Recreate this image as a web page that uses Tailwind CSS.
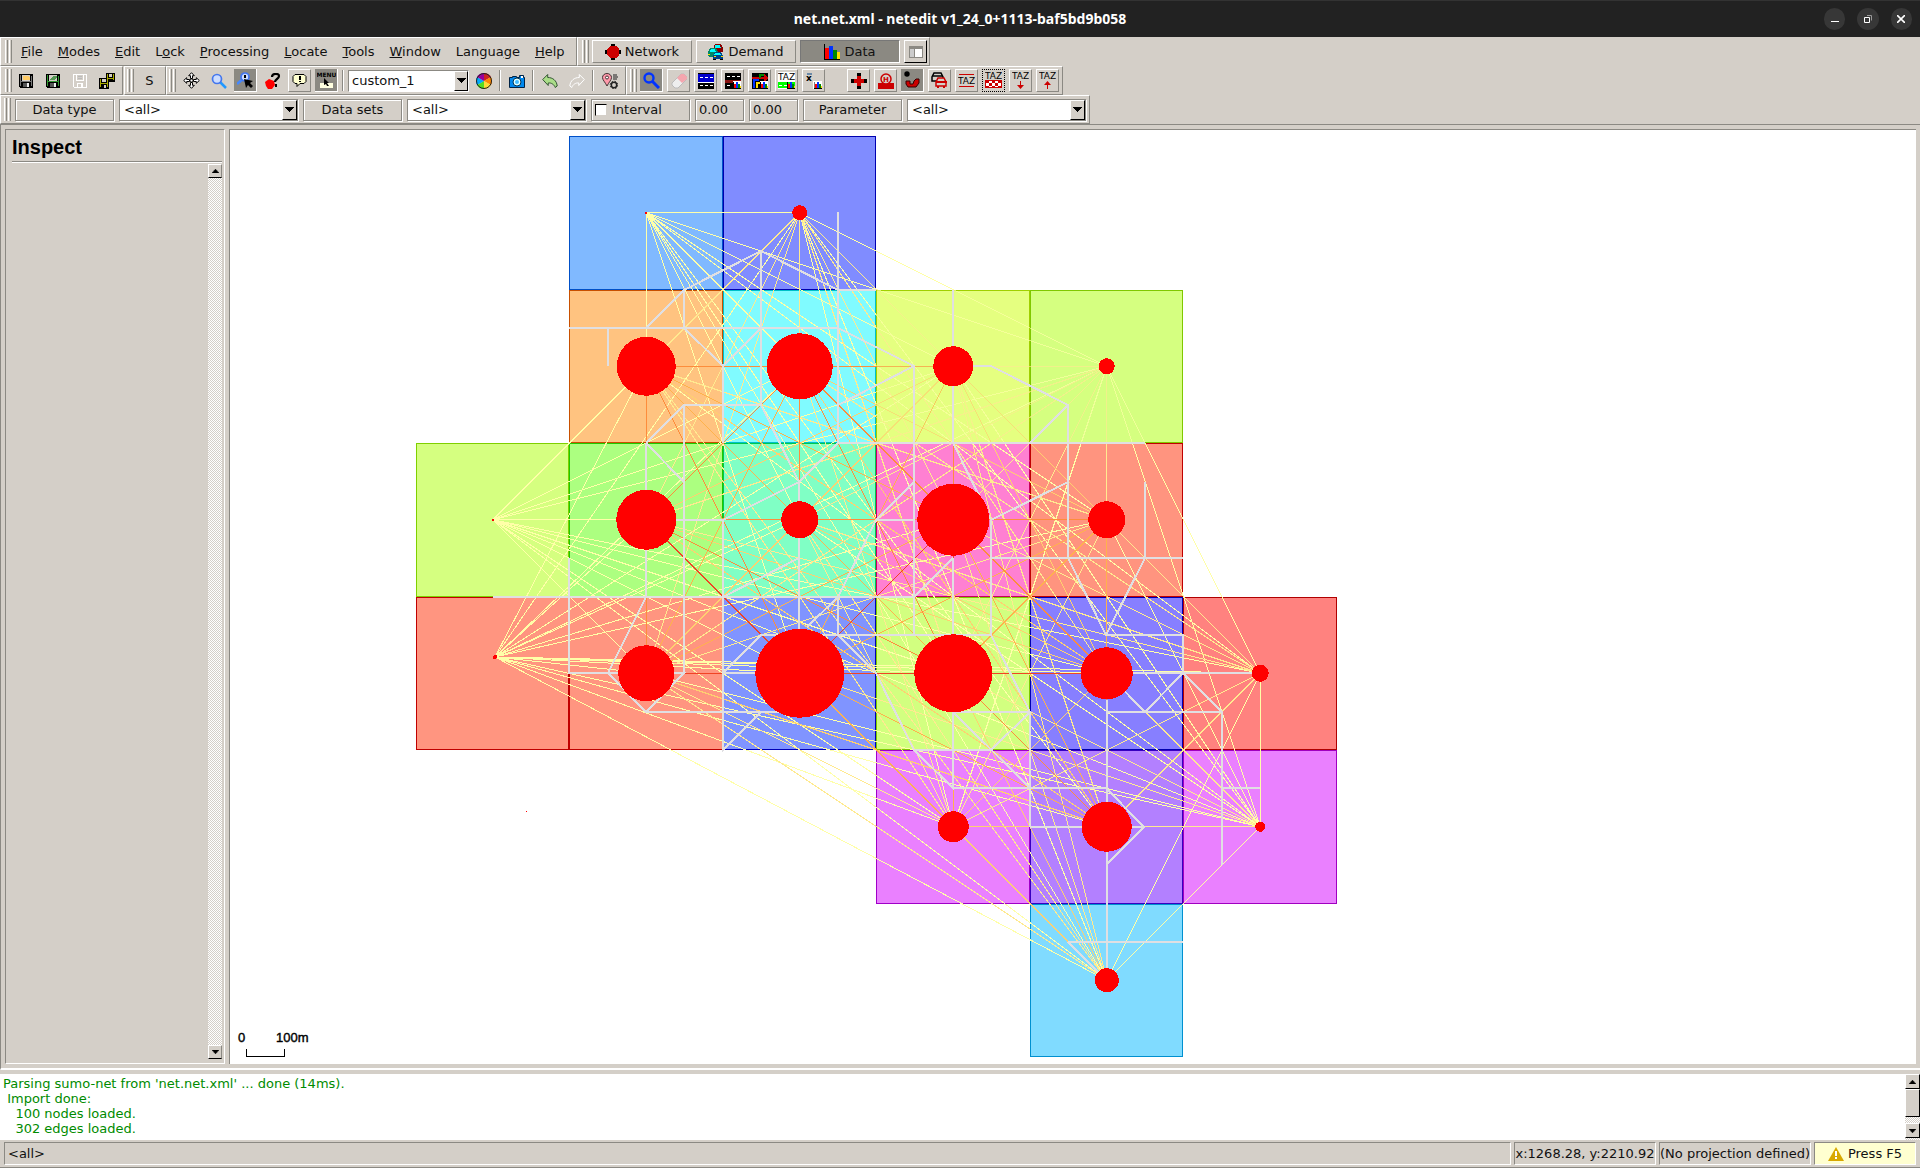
<!DOCTYPE html>
<html lang="en">
<head>
  <meta charset="UTF-8">
  <meta name="viewport" content="width=device-width, initial-scale=1.0">
  <title>net.net.xml - netedit</title>
  <script src="https://cdn.jsdelivr.net/npm/@tailwindcss/browser@4"></script>
</head>
<body class="h-screen flex flex-col overflow-hidden bg-[#d4cfc8] font-['DejaVu_Sans',sans-serif] text-[13px] leading-[15px] text-[#111]">

  <!-- Icons used more than once -->
  <svg class="hidden">
    <symbol id="arrow-down" viewBox="0 0 9 5"><path d="M0 0h9v1h-1v1h-1v1h-1v1h-1v1h-1v-1h-1v-1h-1v-1h-1v-1h-1z"/></symbol>
    <symbol id="arrow-up" viewBox="0 0 9 5"><path d="M4 0h1v1h1v1h1v1h1v1h1v1h-9v-1h1v-1h1v-1h1v-1h1z"/></symbol>
    <symbol id="bars" viewBox="0 0 8 7"><path d="M0 0v7" stroke="#000"/><path d="M1 2h2v4h-2z" fill="red"/><path d="M3 0h2v6h-2z" fill="#03f"/><path d="M5 2h2v4h-2z" fill="#080"/><path d="M7 4h1v2h-1z" fill="#fd0"/><path d="M0 6h8v1h-8z"/></symbol>
    <symbol id="junction" viewBox="0 0 16 16"><path d="M6 0h4v4h-4zM6 12h4v4h-4zM0 6h4v4h-4zM12 6h4v4h-4z"/><path d="M5 2h6l3 3v6l-3 3h-6l-3-3v-6z" fill="#c00"/></symbol>
    <symbol id="floppy" viewBox="0 0 14 14"><path d="M0 0h14v14h-13l-1-1z"/><path d="M1 1h1v11h-1zM12 2h1v10h-1zM2 7h10v1h-10z" fill="currentColor"/><path d="M3 1h8v6h-8z" fill="#d4cfc8"/><path d="M4 9h6v4h-6z" fill="#555"/><path d="M8 9h2v4h-2z" fill="#eee"/></symbol>
  </svg>

  <!-- Title bar -->
  <header class="h-[37px] shrink-0 flex items-center bg-[#222] border-t border-[#333] text-white">
    <div class="w-24"></div>
    <h1 class="flex-1 text-center font-bold text-sm font-['Noto_Sans',sans-serif]">net.net.xml - netedit v1_24_0+1113-baf5bd9b058</h1>
    <div class="w-24 flex gap-3 pr-2 justify-end">
      <button aria-label="Minimize" class="size-[22px] rounded-full bg-[#373737] flex items-center justify-center"><svg class="w-2 h-2" viewBox="0 0 8 8"><path d="M0 6h8v1h-8z" fill="#fff"/></svg></button>
      <button aria-label="Restore" class="size-[22px] rounded-full bg-[#373737] flex items-center justify-center"><svg class="w-2 h-2" viewBox="0 0 8 8" fill="none"><path d="M3 .5h4.500v5" stroke="#999"/><path d="M.5 2.500h5v5h-5z" stroke="#fff"/></svg></button>
      <button aria-label="Close" class="size-[22px] rounded-full bg-[#373737] flex items-center justify-center"><svg class="w-2 h-2" viewBox="0 0 8 8"><path d="M0 0l8 8M8 0l-8 8" stroke="#fff" stroke-width="1.600"/></svg></button>
    </div>
  </header>

  <!-- Menu and supermodes -->
  <div class="flex h-[29px] shrink-0">
    <nav class="w-[577px] flex items-center pl-1 border-t border-l border-r border-b border-t-white border-l-white border-r-[#8b8983] border-b-[#8b8983]">
      <div class="w-[7px] h-[23px] flex gap-px mr-[9px]"><i class="w-[3px] border-l border-r border-l-white border-r-[#8b8983]"></i><i class="w-[3px] border-l border-r border-l-white border-r-[#8b8983]"></i></div>
      <div class="flex gap-[15px] leading-5">
        <button><u>F</u>ile</button>
        <button><u>M</u>odes</button>
        <button><u>E</u>dit</button>
        <button>L<u>o</u>ck</button>
        <button><u>P</u>rocessing</button>
        <button><u>L</u>ocate</button>
        <button><u>T</u>ools</button>
        <button><u>W</u>indow</button>
        <button>Langua<u>g</u>e</button>
        <button><u>H</u>elp</button>
      </div>
    </nav>
    <div class="flex items-center gap-1 pl-1 pr-[2px] border border-t-white border-l-white border-r-[#8b8983] border-b-[#8b8983]">
      <div class="w-[7px] h-[23px] flex gap-px -mr-px"><i class="w-[3px] border-l border-r border-l-white border-r-[#8b8983]"></i><i class="w-[3px] border-l border-r border-l-white border-r-[#8b8983]"></i></div>
      <button class="w-[100px] h-[23px] flex items-center justify-center gap-1 border border-t-white border-l-white border-r-[#8b8983] border-b-[#8b8983]"><svg class="size-4" shape-rendering="crispEdges"><use href="#junction"/></svg>Network</button>
      <button class="w-[100px] h-[23px] flex items-center justify-center gap-1 border border-t-white border-l-white border-r-[#8b8983] border-b-[#8b8983]">
        <svg class="size-4" viewBox="0 0 16 16" shape-rendering="crispEdges">
          <path d="M6 1l1-1h6l2 4v4h-9z" fill="#800"/><path d="M7 1h5l1 3h-6z" fill="#0ff"/>
          <path d="M0 8l2-4h6l2 4v5h-9l-1-1z" fill="#086"/><path d="M3 5h4l1 3h-6z" fill="#0ff"/><path d="M0 10h2v1h-2z" fill="#fd0"/>
          <path d="M5 12l2-4h6l2 4v3h-10z" fill="#048"/><path d="M7 9h5l1 2h-7z" fill="#0ff"/><path d="M6 12h2v1h-2zM13 12h2v1h-2z" fill="#fd0"/><path d="M5 15h3v1h-3zM12 15h3v1h-3z"/>
        </svg>Demand</button>
      <button class="w-[100px] h-[23px] flex items-center justify-center gap-1 bg-[#8b8982] border border-t-[#777] border-l-[#777] border-r-white border-b-white">
        <svg class="size-4" viewBox="0 0 16 16" shape-rendering="crispEdges"><path d="M1 4h4v11h-4z" fill="red"/><path d="M5 2h4v13h-4z" fill="#03f"/><path d="M9 6h4v9h-4z" fill="#080"/><path d="M13 8h3v7h-3z" fill="#fd0"/><path d="M0 0h1v16h-1zM0 15h16v1h-16z"/></svg>Data</button>
      <button aria-label="View panels" class="size-[23px] flex items-center justify-center border border-t-white border-l-white border-r-black border-b-black"><svg class="w-[14px] h-3" viewBox="0 0 14 12"><path d="M0 0h14v12h-14z" fill="#8b8983"/><path d="M1 3h4v8h-4z" fill="#ccc"/><path d="M6 3h7v8h-7z" fill="#fff"/></svg></button>
    </div>
  </div>

  <!-- File, view and edit mode buttons -->
  <div class="flex h-[29px] shrink-0">
    <div class="w-[123px] flex items-center gap-1 pl-1 border border-t-white border-l-white border-r-[#8b8983] border-b-[#8b8983]">
      <div class="w-[7px] h-[23px] flex gap-px shrink-0 -mr-[2px]"><i class="w-[3px] border-l border-r border-l-white border-r-[#8b8983]"></i><i class="w-[3px] border-l border-r border-l-white border-r-[#8b8983]"></i></div>
      <button aria-label="Save network" class="size-[23px] flex items-center justify-center text-[#777]"><svg class="size-[14px]" viewBox="0 0 14 14" shape-rendering="crispEdges"><use href="#floppy"/><path d="M4 2h5l2 2v2h-7z" fill="#fc6"/></svg></button>
      <button aria-label="Save additionals" class="size-[23px] flex items-center justify-center text-[#393]"><svg class="size-[14px]" viewBox="0 0 14 14" shape-rendering="crispEdges"><use href="#floppy"/><path d="M4 5l3-3h4v1l-3 3h-4z" fill="#595"/></svg></button>
      <button aria-label="Save demand" disabled class="size-[23px] flex items-center justify-center"><svg class="size-[14px]" viewBox="0 0 14 14" fill="none" stroke="#fff" shape-rendering="crispEdges"><path d="M.5 .5h13v13h-12l-1-1zM3.500 .5v6h7v-6M4.500 13v-4h5v4M8.500 9v4"/><path d="M5 2.500h4M5 4.500h4" stroke="#bbb"/></svg></button>
      <button aria-label="Save all" class="size-[23px] flex items-center justify-center text-[#aa0]"><svg class="size-4" viewBox="0 0 16 16" shape-rendering="crispEdges"><path d="M7 0h9v9h-9zM0 5h10v11h-10z"/><path d="M8 1h1v6h-1zM14 1h1v6h-1zM8 5h6v1h-6zM1 6h1v8h-1zM8 6h1v8h-1zM2 10h6v1h-6z" fill="currentColor"/><path d="M10 1h3v3h-3zM3 6h4v3h-4zM5 12h2v3h-2z" fill="#d4cfc8"/></svg></button>
    </div>
    <div class="w-[42px] ml-px flex items-center pl-[2px] border border-t-white border-l-white border-r-[#8b8983] border-b-[#8b8983]">
      <div class="w-[7px] h-[23px] flex gap-px"><i class="w-[3px] border-l border-r border-l-white border-r-[#8b8983]"></i><i class="w-[3px] border-l border-r border-l-white border-r-[#8b8983]"></i></div>
      <button class="flex-1 text-center">S</button>
    </div>
    <div class="w-[460px] flex items-center gap-1 pl-[2px] border border-t-white border-l-white border-r-[#8b8983] border-b-[#8b8983]">
      <div class="w-[7px] h-[23px] flex gap-px shrink-0"><i class="w-[3px] border-l border-r border-l-white border-r-[#8b8983]"></i><i class="w-[3px] border-l border-r border-l-white border-r-[#8b8983]"></i></div>
      <button aria-label="Recenter" class="size-[23px] shrink-0 flex items-center justify-center"><svg class="size-[17px]" viewBox="0 0 17 17" fill="#fff" stroke="#000"><path d="M8.500 .7l2.800 3h-1.800v2.800h-2v-2.800h-1.800zM8.500 16.300l2.800-3h-1.800v-2.800h-2v2.800h-1.800zM.7 8.500l3-2.800v1.800h2.800v2h-2.800v1.800zM16.300 8.500l-3-2.800v1.800h-2.800v2h2.800v1.800z"/><circle cx="8.500" cy="8.500" r="1.500"/></svg></button>
      <button aria-label="Zoom" class="size-[23px] shrink-0 flex items-center justify-center"><svg class="size-4" viewBox="0 0 16 16"><path d="M9 9l6 6" stroke="#29f" stroke-width="2.500"/><circle cx="6" cy="6" r="4.500" fill="#cdf" stroke="#47e" stroke-width="1.700"/></svg></button>
      <button aria-label="Zoom style" class="size-[23px] shrink-0 flex items-center justify-center bg-[#8b8982] border-r border-b border-white"><svg class="size-4" viewBox="0 0 16 16"><path d="M6 7l-6 5" stroke="#48f" stroke-width="2.500"/><circle cx="8" cy="5" r="4" fill="#cdf" stroke="#47e" stroke-width="1.700"/><path d="M7 3h2v3h-2z"/><path d="M7 7l9 2-3 2 3 3-2 2-3-3-2 3z"/></svg></button>
      <button aria-label="Help on element" class="size-[23px] shrink-0 flex items-center justify-center"><svg class="size-4" viewBox="0 0 16 16"><path d="M0 9l4-3 5 2 1 4-3 4h-4l-2-3z" fill="red"/><path d="M7 4c0-4 7-4 7-1s-4 3-4 6" fill="none" stroke="#000" stroke-width="2.200"/><path d="M10 11h2v3h-2z"/></svg></button>
      <button aria-label="Tooltips" class="size-[23px] shrink-0 flex items-center justify-center border border-t-white border-l-white border-r-[#8b8983] border-b-[#8b8983]"><svg class="size-[15px]" viewBox="0 0 15 15"><path d="M3 1.500h9l2 2v5l-2 2h-4l-3 3v-3h-2l-2-2v-5z" fill="#ffffd0" stroke="#000"/><path d="M7 3h2v4h-2zM7 8h2v1h-2z"/></svg></button>
      <button aria-label="Menu hints" class="size-[23px] shrink-0 flex items-center justify-center bg-[#8b8982] border-r border-b border-white"><svg class="size-[19px]" viewBox="0 0 19 19"><text x="9.500" y="6" text-anchor="middle" font-size="6" font-weight="bold">MENU</text><path d="M3 12h13v5h-13z" fill="#ffffe0"/><path d="M7 7l5 5h-2l2 3h-2l-1-2-2 1z"/></svg></button>
      <i class="w-[2px] h-[21px] border-l border-r border-l-[#8b8983] border-r-white"></i>
      <div class="relative w-[121px] h-[22px] shrink-0">
        <select aria-label="Visualization scheme" class="appearance-none w-full h-full pl-[3px] bg-white border border-t-[#8b8983] border-l-[#8b8983] border-white"><option>custom_1</option></select>
        <span class="absolute right-px top-px bottom-px w-[14px] flex items-center justify-center pointer-events-none bg-[#d4cfc8] border border-t-white border-l-white border-r-black border-b-black"><svg class="w-[9px] h-[5px]"><use href="#arrow-down"/></svg></span>
      </div>
      <button aria-label="Edit coloring" class="size-[23px] shrink-0 -ml-px flex items-center justify-center"><svg class="size-4" viewBox="-8 -8 16 16"><path d="M0 0V-8A8 8 0 0 1 7 -4z" fill="#c22"/><path d="M0 0L7-4A8 8 0 0 1 7 4z" fill="#f80"/><path d="M0 0L7 4A8 8 0 0 1 0 8z" fill="#fd3"/><path d="M0 0V8A8 8 0 0 1-7 4z" fill="#5d2"/><path d="M0 0L-7 4A8 8 0 0 1-7-4z" fill="#0af"/><path d="M0 0L-7-4A8 8 0 0 1 0-8z" fill="#909"/><circle r="7.500" fill="none" stroke="#222"/></svg></button>
      <i class="w-[2px] h-[21px] border-l border-r border-l-[#8b8983] border-r-white"></i>
      <button aria-label="Snapshot" class="size-[23px] shrink-0 flex items-center justify-center"><svg class="w-4 h-[14px]" viewBox="0 0 16 14"><path d="M.5 3.500h3v-1h4v1h3v-2h4v2h1v10h-15z" fill="#08e" stroke="#024"/><circle cx="8" cy="8" r="4" fill="#dff" stroke="#035"/><circle cx="8" cy="8" r="2" fill="#4bf"/><path d="M12 2h2v2h-2z" fill="#fff"/></svg></button>
      <i class="w-[2px] h-[21px] border-l border-r border-l-[#8b8983] border-r-white"></i>
      <button aria-label="Undo" class="size-[23px] shrink-0 flex items-center justify-center"><svg class="w-4 h-[14px]" viewBox="0 0 16 14"><path d="M.7 5.500l5-5v3c5 0 9 3 9.500 8.500l-2 1.500c-1-3-4-5-7-4.500v2.500z" fill="#ad8" stroke="#353"/></svg></button>
      <button aria-label="Redo" disabled class="size-[23px] shrink-0 flex items-center justify-center"><svg class="w-4 h-[14px]" viewBox="0 0 16 14"><path d="M15.300 5.500l-5-5v3c-5 0-9 3-9.500 8.500l2 1.500c1-3 4-5 7-4.500v2.500z" fill="#d4cfc8" stroke="#fff"/></svg></button>
      <i class="w-[2px] h-[21px] border-l border-r border-l-[#8b8983] border-r-white"></i>
      <button aria-label="Options" class="size-[23px] shrink-0 flex items-center justify-center"><svg class="size-4" viewBox="0 0 16 16"><path d="M5 13C3 9 .5 7 .5 4.500a4.500 4 0 0 1 9 0C9.500 7 7 9 5 13z" fill="#f9a" stroke="#433"/><circle cx="5" cy="4.500" r="1.500" fill="#fff" stroke="#433"/><path d="M11 2h4M11 4h5M11 6h4" stroke="#222"/><circle cx="12" cy="12" r="2.700" fill="none" stroke="#222" stroke-width="1.500" /><circle cx="12" cy="12" r="3.800" fill="none" stroke="#222" stroke-dasharray="1.500 1.500"/></svg></button>
    </div>
    <div class="flex items-center gap-1 pl-[3px] pr-[3px] border border-t-white border-l-white border-r-[#8b8983] border-b-[#8b8983]">
      <div class="w-[7px] h-[23px] flex gap-px -mr-px"><i class="w-[3px] border-l border-r border-l-white border-r-[#8b8983]"></i><i class="w-[3px] border-l border-r border-l-white border-r-[#8b8983]"></i></div>
      <button aria-label="Inspect mode" class="size-[23px] flex items-center justify-center bg-[#8b8982] border-r border-b border-white"><svg class="size-[17px]" viewBox="0 0 17 17"><circle cx="6" cy="6" r="4.500" fill="none" stroke="#03f" stroke-width="2.400"/><path d="M9 9l7 7" stroke="#03f" stroke-width="3"/></svg></button>
      <button aria-label="Delete mode" class="size-[23px] flex items-center justify-center border border-t-white border-l-white border-r-[#8b8983] border-b-[#8b8983]"><svg class="size-4" viewBox="0 0 16 16"><path d="M1 10l9-9h3l3 3v2l-9 9h-3l-3-3z" fill="#eee" stroke="#bbb"/><path d="M6 5l4-4h3l3 3v2l-5 4z" fill="#f4a6ae"/></svg></button>
      <button aria-label="Select mode" class="size-[23px] flex items-center justify-center border border-t-white border-l-white border-r-[#8b8983] border-b-[#8b8983]"><svg class="size-4" viewBox="0 0 16 16" shape-rendering="crispEdges"><path d="M0 0h16v16h-16z"/><path d="M0 1h16v8h-16z" fill="#00c"/><path d="M2 4h3v1h-3zM7 4h3v1h-3zM12 4h3v1h-3zM2 12h3v1h-3zM7 12h3v1h-3zM12 12h3v1h-3zM0 9h16v1h-16z" fill="#fff"/></svg></button>
      <button aria-label="Edge data" class="size-[23px] flex items-center justify-center border border-t-white border-l-white border-r-[#8b8983] border-b-[#8b8983]"><svg class="size-4" viewBox="0 0 16 16" shape-rendering="crispEdges"><path d="M0 0h16v16h-16z"/><path d="M0 7h16v3h-16z" fill="#811"/><path d="M2 3h3v1h-3zM7 3h3v1h-3zM12 3h3v1h-3zM2 12h3v1h-3z" fill="#fff"/><path d="M8 8h8v8h-8z" fill="#fff"/><use href="#bars" x="8" y="9" width="8" height="7"/></svg></button>
      <button aria-label="Edge relation data" class="size-[23px] flex items-center justify-center border border-t-white border-l-white border-r-[#8b8983] border-b-[#8b8983]"><svg class="size-4" viewBox="0 0 16 16" shape-rendering="crispEdges"><path d="M0 0h16v16h-16z"/><path d="M0 5h15M12 2l3 3-3 3" stroke="#c00" fill="none" stroke-width="1.500"/><path d="M8 5v-3h4" stroke="#080" stroke-width="2" fill="none"/><path d="M2 15v-8h5" stroke="#03f" stroke-width="2" fill="none"/><path d="M5 15v-5h3" stroke="#fd0" stroke-width="2" fill="none"/><path d="M8 8h8v8h-8z" fill="#fff"/><use href="#bars" x="8" y="9" width="8" height="7"/></svg></button>
      <button aria-label="TAZ relation data" class="size-[23px] flex items-center justify-center border border-t-white border-l-white border-r-[#8b8983] border-b-[#8b8983]"><svg class="size-[17px]" viewBox="0 0 17 17" shape-rendering="crispEdges"><path d="M0 0h17v17h-17z" fill="#fff"/><text x="8.500" y="8" text-anchor="middle" font-size="9">TAZ</text><path d="M0 10h17v6h-17z" fill="#0f0"/><path d="M1 13h3v1h-3zM6 13h3v1h-3z" fill="#fff"/><use href="#bars" x="9" y="9" width="8" height="8"/></svg></button>
      <button aria-label="Mean data" class="size-[23px] flex items-center justify-center border border-t-white border-l-white border-r-[#8b8983] border-b-[#8b8983]"><svg class="size-4" viewBox="0 0 16 16"><text x="0" y="8" font-size="9" font-weight="bold">x</text><path d="M1 1h5" stroke="#048"/><path d="M7 8h9v8h-9z" fill="#fff"/><use href="#bars" x="8" y="9" width="8" height="7"/></svg></button>
      <button aria-label="Show junctions" class="size-[23px] ml-[18px] flex items-center justify-center border border-t-white border-l-white border-r-[#8b8983] border-b-[#8b8983]"><svg class="size-4" viewBox="0 0 16 16" shape-rendering="crispEdges"><path d="M6 0h4v16h-4zM0 6h16v4h-16z"/><path d="M6 3h4v3h3v4h-3v3h-4v-3h-3v-4h3z" fill="#c00"/></svg></button>
      <button aria-label="Show additionals" class="size-[23px] flex items-center justify-center border border-t-white border-l-white border-r-[#8b8983] border-b-[#8b8983]"><svg class="size-4" viewBox="0 0 16 16"><path d="M0 10h16v6h-16z" fill="#c00"/><circle cx="8" cy="6" r="5" fill="#d4cfc8" stroke="#c00" stroke-width="1.500"/><text x="8" y="9" text-anchor="middle" font-size="7" font-weight="bold" fill="#c00">H</text></svg></button>
      <button aria-label="Show shapes" class="size-[23px] flex items-center justify-center bg-[#8b8982] border-r border-b border-white"><svg class="size-[18px]" viewBox="0 0 18 18"><circle cx="4" cy="3" r="2.700"/><path d="M3 10h4v3h3l1-3 2-2h3v4l-3 4h-8l-2-3z" fill="#c00" stroke="#300"/></svg></button>
      <button aria-label="Show demand" class="size-[23px] flex items-center justify-center border border-t-white border-l-white border-r-[#8b8983] border-b-[#8b8983]"><svg class="size-[17px]" viewBox="0 0 17 17" stroke-width="1.500"><path d="M1 9v-4l2-4h7l2 4v4z" fill="#d4cfc8" stroke="#000"/><path d="M2 4h9" stroke="#000"/><path d="M5 14v-4l2-4h6l2 4v4z" fill="#d4cfc8" stroke="#c00"/><path d="M5 10h11M6 15h2M12 15h2" stroke="#c00" stroke-width="2"/></svg></button>
      <button aria-label="TAZ drawing" class="size-[23px] flex items-center justify-center border border-t-white border-l-white border-r-[#8b8983] border-b-[#8b8983]"><svg class="size-[17px]" viewBox="0 0 17 17"><path d="M1 2h15v1h-15zM1 14h15v1h-15z" fill="#c00"/><text x="8.500" y="12" text-anchor="middle" font-size="9">TAZ</text></svg></button>
      <button aria-label="TAZ fill" class="size-[23px] flex items-center justify-center border border-dotted border-black"><svg class="size-[17px]" viewBox="0 0 17 17" shape-rendering="crispEdges"><text x="8.500" y="7" text-anchor="middle" font-size="9">TAZ</text><path d="M0 8h17v8h-17z" fill="#c00"/><path d="M4 9h3v2h-3zM10 9h3v2h-3zM1 11h3v3h-3zM7 11h3v3h-3zM13 11h3v3h-3zM4 14h3v1h-3zM10 14h3v1h-3z" fill="#fff"/></svg></button>
      <button aria-label="TAZ rel only from" class="size-[23px] flex items-center justify-center border border-t-white border-l-white border-r-[#8b8983] border-b-[#8b8983]"><svg class="size-[17px]" viewBox="0 0 17 17"><text x="8.500" y="7" text-anchor="middle" font-size="9">TAZ</text><path d="M8 9h1v4h3l-3.500 4-3.500-4h3z" fill="#c00"/></svg></button>
      <button aria-label="TAZ rel only to" class="size-[23px] flex items-center justify-center border border-t-white border-l-white border-r-[#8b8983] border-b-[#8b8983]"><svg class="size-[17px]" viewBox="0 0 17 17"><text x="8.500" y="7" text-anchor="middle" font-size="9">TAZ</text><path d="M8 17h1v-4h3l-3.500-4-3.500 4h3z" fill="#c00"/></svg></button>
    </div>
  </div>

  <!-- Interval bar -->
  <div class="flex h-[29px] shrink-0">
    <div class="flex items-center gap-[5px] px-[3px] border border-t-white border-l-white border-r-[#8b8983] border-b-[#8b8983]">
      <div class="w-[7px] h-[23px] flex gap-px mr-[-1px]"><i class="w-[3px] border-l border-r border-l-white border-r-[#8b8983]"></i><i class="w-[3px] border-l border-r border-l-white border-r-[#8b8983]"></i></div>
      <label for="dtype" class="w-[99px] h-[22px] flex items-center justify-center border border-[#8b8983] shadow-[inset_1px_1px_#fff,1px_1px_#fff]">Data type</label>
      <div class="relative w-[179px] h-[22px]">
        <select id="dtype" class="appearance-none w-full h-full pl-1 bg-white border border-[#8b8983] shadow-[1px_1px_#fff]"><option>&lt;all&gt;</option></select>
        <span class="absolute right-px top-px bottom-px w-[15px] flex items-center justify-center pointer-events-none bg-[#d4cfc8] border border-t-white border-l-white border-r-black border-b-black"><svg class="w-[9px] h-[5px]"><use href="#arrow-down"/></svg></span>
      </div>
      <label for="dsets" class="w-[99px] h-[22px] flex items-center justify-center border border-[#8b8983] shadow-[inset_1px_1px_#fff,1px_1px_#fff]">Data sets</label>
      <div class="relative w-[179px] h-[22px]">
        <select id="dsets" class="appearance-none w-full h-full pl-1 bg-white border border-[#8b8983] shadow-[1px_1px_#fff]"><option>&lt;all&gt;</option></select>
        <span class="absolute right-px top-px bottom-px w-[15px] flex items-center justify-center pointer-events-none bg-[#d4cfc8] border border-t-white border-l-white border-r-black border-b-black"><svg class="w-[9px] h-[5px]"><use href="#arrow-down"/></svg></span>
      </div>
      <label class="w-[99px] h-[22px] flex items-center gap-[5px] pl-[3px] border border-[#8b8983] shadow-[inset_1px_1px_#fff,1px_1px_#fff]"><input type="checkbox" class="appearance-none size-3 bg-white border border-t-black border-l-black border-[#d4cfc8]">Interval</label>
      <input aria-label="Interval begin" value="0.00" class="w-[49px] h-[22px] pl-[3px] border border-[#8b8983] shadow-[inset_1px_1px_#fff,1px_1px_#fff]">
      <input aria-label="Interval end" value="0.00" class="w-[49px] h-[22px] pl-[3px] border border-[#8b8983] shadow-[inset_1px_1px_#fff,1px_1px_#fff]">
      <label for="param" class="w-[99px] h-[22px] flex items-center justify-center border border-[#8b8983] shadow-[inset_1px_1px_#fff,1px_1px_#fff]">Parameter</label>
      <div class="relative w-[179px] h-[22px]">
        <select id="param" class="appearance-none w-full h-full pl-1 bg-white border border-[#8b8983] shadow-[1px_1px_#fff]"><option>&lt;all&gt;</option></select>
        <span class="absolute right-px top-px bottom-px w-[15px] flex items-center justify-center pointer-events-none bg-[#d4cfc8] border border-t-white border-l-white border-r-black border-b-black"><svg class="w-[9px] h-[5px]"><use href="#arrow-down"/></svg></span>
      </div>
    </div>
  </div>

  <!-- Inspector and network view -->
  <main class="flex-1 min-h-0 flex gap-1 p-1 border-t border-l border-[#8b8983] border-b-2 border-b-white">
    <aside class="w-[220px] shrink-0 flex flex-col border border-t-[#8b8983] border-l-[#8b8983] border-white pl-[6px] pr-[2px] pb-1">
      <h2 class="h-8 pt-[2px] flex items-center font-bold text-xl text-black font-['Liberation_Sans',sans-serif] border-b border-[#8b8983] shadow-[0_1px_#fff]">Inspect</h2>
      <div class="flex-1 w-[14px] mt-[2px] self-end flex flex-col bg-[repeating-conic-gradient(#fff_0_25%,#d4cfc8_0_50%)] bg-[length:2px_2px]">
        <button aria-label="Scroll up" class="h-[14px] flex items-center justify-center bg-[#d4cfc8] border border-t-white border-l-white border-r-[#8b8983] border-b-black"><svg class="w-[7px] h-1"><use href="#arrow-up"/></svg></button>
        <div class="flex-1"></div>
        <button aria-label="Scroll down" class="h-[14px] flex items-center justify-center bg-[#d4cfc8] border border-t-white border-l-white border-r-[#8b8983] border-b-black"><svg class="w-[7px] h-1"><use href="#arrow-down"/></svg></button>
      </div>
    </aside>
    <section class="flex-1 min-w-0 bg-white border-t border-l border-[#8b8983]">
      <svg id="net" class="w-full h-full" viewBox="230 130 1686 934" preserveAspectRatio="xMinYMin meet" shape-rendering="crispEdges">
        <g id="zones"></g>
        <g id="relations" stroke-width="1"></g>
        <g id="veil" opacity="0.350"></g>
        <path id="roads" fill="none" stroke="#e0dfe2" stroke-width="2" d="
          M838 212V443M569 328H838L914 366V635M761 251V405M684 290L761 251L838 290H876M646 328L684 290V328L723 366V443M761 328L723 366
          M608 328V366M646 443L684 405H761L799 482M684 405V673M953 290V443L991 520V635M973 366H991L1068 405V558L1106 635M1068 405L1030 443
          M838 443H1145M914 366L838 405M838 443L799 482M646 443V597L608 673L646 712L684 673H569V558M646 443L684 482M668 520H723L799 482V635
          M723 520V750L761 712M799 558L723 597M493 597H914M838 597V635M838 597L807 627M914 520H876L838 597M876 520L914 482
          M646 712H799M723 673L761 635H991M723 673H799M838 635L876 673L914 750L953 788V712H1030V827M953 558V635M953 558L914 597
          M953 788H1106L1144 827L1106 865M991 520L1068 482M991 558H1183M1145 482V558L1106 635H1183V673M1106 673H1260M1145 712L1183 673L1222 712
          M1107 712H1222V865M1107 673L1145 712M1107 700V980M991 635L1030 712L991 750M953 712L1030 788M914 750H991M1030 827H1145
          M1222 788H1260M1068 942H1183M1068 942L1106 980"/>
        <g id="sources" fill="red"></g>
        <g font-family="Liberation Sans, sans-serif" font-size="13" fill="#000" stroke="#000" stroke-width="0.400">
          <text x="238" y="1042">0</text>
          <text x="276" y="1042">100m</text>
        </g>
        <path d="M246.500 1049v7.500h38v-7.500" fill="none" stroke="#000"/>
      </svg>
    </section>
  </main>

  <!-- Message log -->
  <div class="mt-1 h-[66px] shrink-0 flex bg-white">
    <div class="flex-1 pt-[2px] pl-[3px] text-[#008b00] whitespace-pre">Parsing sumo-net from 'net.net.xml' ... done (14ms).
 Import done:
   100 nodes loaded.
   302 edges loaded.</div>
    <div class="w-[15px] flex flex-col pb-[2px] bg-[repeating-conic-gradient(#fff_0_25%,#d4cfc8_0_50%)] bg-[length:2px_2px]">
      <button aria-label="Log up" class="h-[15px] flex items-center justify-center bg-[#d4cfc8] border border-t-white border-l-white border-r-black border-b-black"><svg class="w-[7px] h-1"><use href="#arrow-up"/></svg></button>
      <div class="h-7 bg-[#d4cfc8] border border-t-white border-l-white border-r-black border-b-black"></div>
      <div class="flex-1"></div>
      <button aria-label="Log down" class="h-[15px] flex items-center justify-center bg-[#d4cfc8] border border-t-white border-l-white border-r-black border-b-black"><svg class="w-[7px] h-1"><use href="#arrow-down"/></svg></button>
    </div>
  </div>

  <!-- Status bar -->
  <footer class="h-7 shrink-0 flex items-center gap-[3px] px-1 border-b border-[#8b8983]">
    <div class="flex-1 h-[23px] flex items-center pl-[3px] border border-t-[#8b8983] border-l-[#8b8983] border-white">&lt;all&gt;</div>
    <div class="w-[142px] h-[23px] flex items-center justify-center whitespace-nowrap border border-t-[#8b8983] border-l-[#8b8983] border-white">x:1268.28, y:2210.92</div>
    <div class="w-[152px] h-[23px] flex items-center justify-center whitespace-nowrap border border-t-[#8b8983] border-l-[#8b8983] border-white">(No projection defined)</div>
    <button class="w-[102px] h-[23px] flex items-center justify-center gap-1 bg-[#ffffd0] border border-t-[#8b8983] border-l-[#8b8983] border-white"><svg class="w-4 h-[14px]" viewBox="0 0 16 14"><path d="M8 0l8 14h-16z" fill="#d8a800"/><path d="M7 4h2v5h-2zM7 10h2v2h-2z" fill="#fff"/></svg>Press F5</button>
  </footer>

  <script>
    // Traffic zones: column, row, fill, border, source radius
    const zones = [
      [1, 0, "#80b9ff", "#0050c8", 1],
      [2, 0, "#808cff", "#0000b0", 7.5],
      [1, 1, "#ffc380", "#c85000", 29.5],
      [2, 1, "#80fbff", "#00c0c8", 33],
      [3, 1, "#e5ff80", "#a0d000", 20],
      [4, 1, "#d5ff80", "#80c800", 8],
      [0, 2, "#d5ff80", "#80d000", 1],
      [1, 2, "#acff80", "#20c800", 30],
      [2, 2, "#80ffc5", "#00c850", 18.5],
      [3, 2, "#ff80d2", "#c80060", 36],
      [4, 2, "#ff947f", "#c00000", 18.5],
      [0, 3, "#ff9580", "#c00000", 2],
      [1, 3, "#ff9580", "#c00000", 28],
      [2, 3, "#8094ff", "#0000b8", 44.5],
      [3, 3, "#d2ff80", "#80c800", 39],
      [4, 3, "#877fff", "#0000b0", 26],
      [5, 3, "#ff827f", "#b00000", 8.5],
      [3, 4, "#ea80ff", "#a000c8", 15.5],
      [4, 4, "#b380ff", "#3800c0", 25],
      [5, 4, "#ea80ff", "#a000c0", 5],
      [4, 5, "#80dbff", "#0090d0", 12],
    ];
    const size = 153.5;
    const ramp = ["#ffffa8", "#ffea90", "#fed070", "#feb24c", "#fd8d3c", "#f04424"];

    const points = zones.map(([col, row, , , r]) => {
      // the outermost lower-left zone has its centre shifted
      if (col === 0 && row === 3) return { x: 495, y: 657, r };
      return { x: 416 + (col + 0.5) * size, y: 136 + (row + 0.5) * size, r };
    });

    const drawZone = ([col, row, fill, border]) =>
      `<rect x="${416 + col * size}" y="${136.5 + row * size}" width="${size - 1}" height="${size - 1}" fill="${fill}" stroke="${border}"/>`;
    document.getElementById('zones').innerHTML = zones.map(drawZone).join('');
    document.getElementById('veil').innerHTML = zones.filter((z, i) => i === 4 || i === 5).map(drawZone).join('');

    // Every pair of zones is connected, coloured by the amount of traffic
    const lines = [];
    points.forEach((a, i) => {
      points.slice(i + 1).forEach((b, k) => {
        const j = i + 1 + k;
        if (i === 0 && (j === 6 || j === 11)) return;
        if (i === 6 && j === 11) return;
        const dist = Math.hypot(a.x - b.x, a.y - b.y) / size;
        const flow = a.r * b.r / Math.pow(dist, 0.7);
        const level = [70, 250, 430, 640, 980].filter(limit => flow > limit).length;
        lines.push({ a, b, level });
      });
    });
    lines.sort((p, q) => p.level - q.level);
    document.getElementById('relations').innerHTML = lines.map(({ a, b, level }) =>
      `<line x1="${a.x}" y1="${a.y}" x2="${b.x}" y2="${b.y}" stroke="${ramp[level]}"/>`).join('');

    document.getElementById('sources').innerHTML =
      points.map(p => `<circle cx="${p.x}" cy="${p.y}" r="${p.r}"/>`).join('') +
      '<rect x="526" y="811" width="1" height="1"/>';
  </script>
</body>
</html>
